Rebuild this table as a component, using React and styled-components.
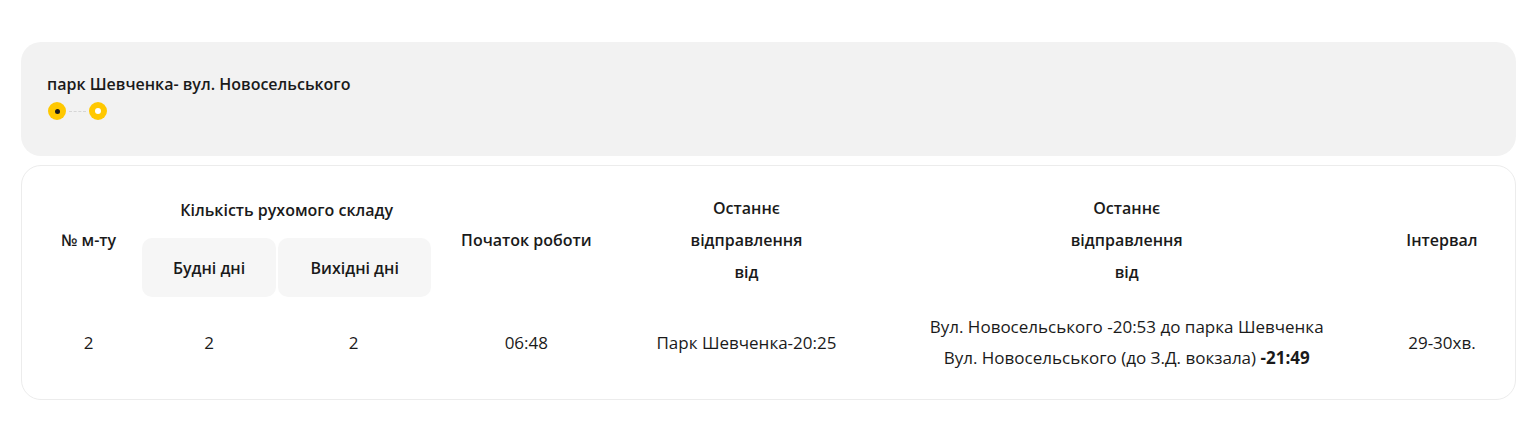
import React from "react";
import styled, { createGlobalStyle } from "styled-components";

const Global = createGlobalStyle`
  html, body { margin: 0; padding: 0; background: #fff; }
  body { font-family: "Open Sans", "Noto Sans", sans-serif; color: #1a1a1a; }
  * { box-sizing: border-box; }
`;

const Page = styled.div`
  padding: 42px 21px 0 21px;
  display: flex;
  flex-direction: column;
  gap: 9px;
`;

const RouteCard = styled.div`
  background: #f2f2f2;
  border-radius: 20px;
  height: 114px;
  padding: 31px 26px 0 26px;
  display: flex;
  flex-direction: column;
  gap: 7px;
`;

const RouteTitle = styled.div`
  font-size: 16px;
  font-weight: 600;
  line-height: 22px;
  color: #1a1a1a;
`;

const Stops = styled.div`
  display: flex;
  align-items: center;
  gap: 3px;
  height: 18px;
  margin-left: 1px;
`;

const Stop = styled.span`
  width: 18px;
  height: 18px;
  border-radius: 50%;
  background: #ffc800;
  display: flex;
  align-items: center;
  justify-content: center;
  &::after {
    content: "";
    width: ${(p) => (p.$end ? 6 : 5)}px;
    height: ${(p) => (p.$end ? 6 : 5)}px;
    border-radius: 50%;
    background: ${(p) => (p.$end ? "#fff" : "#1a1a1a")};
  }
`;

const Dash = styled.span`
  width: 17px;
  border-top: 1px dashed #d6d6d6;
`;

const TableCard = styled.div`
  background: #fff;
  border: 1px solid #ececec;
  border-radius: 20px;
  padding: 16px 13px 12px 13px;
`;

const Table = styled.table`
  width: 100%;
  table-layout: fixed;
  border-collapse: collapse;
  text-align: center;
`;

const HeadCell = styled.th`
  font-size: 16px;
  font-weight: 600;
  line-height: 32px;
  padding: 0;
  vertical-align: middle;
  height: ${(p) => p.$h || "auto"};
  color: #1a1a1a;
`;

const DayBox = styled.div`
  background: #f6f6f6;
  border-radius: 10px;
  height: 59px;
  display: flex;
  align-items: center;
  justify-content: center;
  margin-left: ${(p) => (p.$gap ? "2px" : "0")};
`;

const Cell = styled.td`
  font-size: 17px;
  font-weight: 400;
  line-height: 31px;
  height: 90px;
  padding: 0;
  vertical-align: middle;
  color: #1a1a1a;
`;

const Line = styled.div``;

const Strong = styled.b`
  font-weight: 700;
`;

export default function App() {
  return (
    <>
      <Global />
      <Page>
        <RouteCard>
          <RouteTitle>парк Шевченка- вул. Новосельського</RouteTitle>
          <Stops>
            <Stop />
            <Dash />
            <Stop $end />
          </Stops>
        </RouteCard>
        <TableCard>
          <Table>
            <colgroup>
              <col style={{ width: 107 }} />
              <col style={{ width: 134 }} />
              <col style={{ width: 155 }} />
              <col style={{ width: 190 }} />
              <col style={{ width: 250 }} />
              <col style={{ width: 510 }} />
              <col style={{ width: 120 }} />
            </colgroup>
            <thead>
              <tr>
                <HeadCell rowSpan={2}>№ м-ту</HeadCell>
                <HeadCell colSpan={2} $h="56px">Кількість рухомого складу</HeadCell>
                <HeadCell rowSpan={2}>Початок роботи</HeadCell>
                <HeadCell rowSpan={2}>Останнє<br />відправлення<br />від</HeadCell>
                <HeadCell rowSpan={2}>Останнє<br />відправлення<br />від</HeadCell>
                <HeadCell rowSpan={2}>Інтервал</HeadCell>
              </tr>
              <tr>
                <HeadCell><DayBox>Будні дні</DayBox></HeadCell>
                <HeadCell><DayBox $gap>Вихідні дні</DayBox></HeadCell>
              </tr>
            </thead>
            <tbody>
              <tr>
                <Cell>2</Cell>
                <Cell>2</Cell>
                <Cell>2</Cell>
                <Cell>06:48</Cell>
                <Cell>Парк Шевченка-20:25</Cell>
                <Cell>
                  <Line>Вул. Новосельського -20:53 до парка Шевченка</Line>
                  <Line>Вул. Новосельського (до З.Д. вокзала) <Strong>-21:49</Strong></Line>
                </Cell>
                <Cell>29-30хв.</Cell>
              </tr>
            </tbody>
          </Table>
        </TableCard>
      </Page>
    </>
  );
}
